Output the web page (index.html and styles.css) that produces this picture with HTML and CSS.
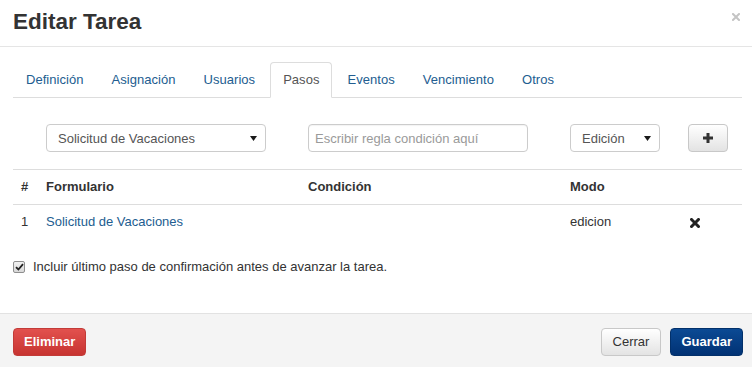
FILE: index.html
```html
<!DOCTYPE html>
<html lang="es">
  <head>
    <meta charset="utf-8" />
    <title>Editar Tarea</title>
    <link rel="stylesheet" href="styles.css">
  </head>

  <body>
    <div class="modal">
      <div class="modal-header">
        <h4 class="modal-title">Editar Tarea</h4>
        <button class="close" title="Cerrar">
          <svg width="8" height="8" viewBox="0 0 8 8"><path d="M1 1L7 7M7 1L1 7" stroke="#c4c4c4" stroke-width="2" stroke-linecap="square"/></svg>
        </button>
      </div>

      <div class="modal-body">
        <ul class="nav-tabs">
          <li><a href="#">Definición</a></li>
          <li><a href="#">Asignación</a></li>
          <li><a href="#">Usuarios</a></li>
          <li class="active"><a href="#">Pasos</a></li>
          <li><a href="#">Eventos</a></li>
          <li><a href="#">Vencimiento</a></li>
          <li><a href="#">Otros</a></li>
        </ul>

        <div class="step-form">
          <span></span>
          <span class="select-wrap form-wide">
            <select class="form-control">
              <option>Solicitud de Vacaciones</option>
            </select>
            <svg class="caret" width="7" height="5" viewBox="0 0 7 5"><path d="M0 0H7L3.5 5Z" fill="#1a1a1a"/></svg>
          </span>
          <input class="form-control form-wide" type="text" placeholder="Escribir regla condición aquí" />
          <span class="select-wrap form-mode">
            <select class="form-control">
              <option>Edición</option>
            </select>
            <svg class="caret" width="7" height="5" viewBox="0 0 7 5"><path d="M0 0H7L3.5 5Z" fill="#1a1a1a"/></svg>
          </span>
          <button class="btn btn-default btn-add" title="Agregar">
            <svg width="10" height="10" viewBox="0 0 10 10"><path d="M3.5 0H6.5V3.5H10V6.5H6.5V10H3.5V6.5H0V3.5H3.5Z" fill="#333"/></svg>
          </button>
        </div>

        <table class="steps">
          <colgroup>
            <col style="width: 25px" />
            <col style="width: 262px" />
            <col style="width: 262px" />
            <col style="width: 120px" />
            <col />
          </colgroup>
          <thead>
            <tr>
              <th>#</th>
              <th>Formulario</th>
              <th>Condición</th>
              <th>Modo</th>
              <th></th>
            </tr>
          </thead>
          <tbody>
            <tr>
              <td>1</td>
              <td><a href="#">Solicitud de Vacaciones</a></td>
              <td></td>
              <td>edicion</td>
              <td>
                <svg class="remove" width="10" height="10" viewBox="0 0 10 10"><path d="M1.5 1.5L8.5 8.5M8.5 1.5L1.5 8.5" stroke="#222" stroke-width="3" stroke-linecap="square"/></svg>
              </td>
            </tr>
          </tbody>
        </table>

        <label class="checkbox">
          <span class="check">
            <svg width="9" height="8" viewBox="0 0 9 8"><path d="M1 4.2L3.4 6.5L8 1.2" fill="none" stroke="#222" stroke-width="1.8"/></svg>
          </span>
          Incluir último paso de confirmación antes de avanzar la tarea.
        </label>
      </div>

      <div class="modal-footer">
        <button class="btn btn-danger">Eliminar</button>
        <span class="spacer"></span>
        <button class="btn btn-default btn-close">Cerrar</button>
        <button class="btn btn-primary">Guardar</button>
      </div>
    </div>
  </body>
</html>
```

FILE: styles.css
```css
* {
  box-sizing: border-box;
}

body {
  margin: 0px;
  background-color: #ffffff;
  color: #333333;
  font-family: "Liberation Sans", Arial, sans-serif;
  font-size: 13px;
  line-height: 18px;
}

a {
  color: #225d90;
  text-decoration: none;
}

.modal {
  width: 752px;
  height: 367px;
  overflow: hidden;
}

.modal-header {
  display: flex;
  align-items: center;
  height: 47px;
  padding: 0px 12px 2px 13px;
  border-bottom: 1px solid #e5e5e5;
}

.modal-title {
  flex: 1;
  margin: 0px;
  font-size: 22.5px;
  line-height: 24px;
  font-weight: bold;
  color: #333333;
}

.close {
  border: 0px;
  padding: 0px;
  background: none;
  display: flex;
  margin-bottom: 10px;
}

.modal-body {
  padding: 15px 10px 0px 13px;
  height: 266px;
}

.nav-tabs {
  display: flex;
  list-style: none;
  margin: 0px;
  padding: 0px;
  border-bottom: 1px solid #dddddd;
}

.nav-tabs li {
  margin-right: 2px;
  margin-bottom: -1px;
}

.nav-tabs a {
  display: block;
  padding: 8px 12px;
  border: 1px solid transparent;
  border-radius: 4px 4px 0px 0px;
  letter-spacing: 0.04px;
}

.nav-tabs .active a {
  color: #555555;
  background-color: #ffffff;
  border-color: #dddddd #dddddd transparent;
}

.step-form {
  display: grid;
  grid-template-columns: 25px 262px 262px 120px 1fr;
  align-items: center;
  margin-top: 26px;
  height: 28px;
}

.form-control {
  height: 28px;
  padding: 0px 6px;
  border: 1px solid #cccccc;
  border-radius: 4px;
  font-family: inherit;
  font-size: 13px;
  color: #555555;
  background-color: #ffffff;
  box-shadow: inset 0 1px 1px rgba(0, 0, 0, 0.05);
}

.form-control::placeholder {
  color: #9a9a9a;
}

.form-wide {
  width: 220px;
  margin-left: 8px;
}

.form-mode {
  width: 90px;
  margin-left: 8px;
}

.select-wrap {
  position: relative;
  display: block;
}

.select-wrap select {
  appearance: none;
  width: 100%;
  padding-left: 11px;
  box-shadow: none;
}

.select-wrap .caret {
  position: absolute;
  right: 9px;
  top: 12px;
}

.btn {
  height: 28px;
  padding: 0px 10px;
  border: 1px solid transparent;
  border-radius: 4px;
  font-family: inherit;
  font-size: 13px;
  line-height: 26px;
  cursor: pointer;
}

.btn-default {
  color: #333333;
  border-color: #c8c8c8;
  background-image: linear-gradient(to bottom, #ffffff 0%, #e3e3e3 100%);
}

.btn-add {
  width: 40px;
  margin-left: 6px;
  padding: 0px;
  display: flex;
  align-items: center;
  justify-content: center;
}

.steps {
  width: 100%;
  border-collapse: collapse;
  margin-top: 17px;
}

.steps th,
.steps td {
  padding: 8px;
  text-align: left;
  border-top: 1px solid #dddddd;
  vertical-align: middle;
}

.steps th {
  font-weight: bold;
  height: 35px;
}

.steps td {
  height: 35px;
}

.remove {
  display: block;
  margin-top: 1px;
}

.checkbox {
  display: flex;
  align-items: center;
  margin-top: 18px;
  color: #333333;
}

.check {
  display: flex;
  align-items: center;
  justify-content: center;
  width: 12px;
  height: 12px;
  margin-right: 8px;
  border: 1px solid #8f8f8f;
  border-radius: 2px;
  background-image: linear-gradient(to bottom, #f2f2f2 0%, #d8d8d8 100%);
}

.modal-footer {
  display: flex;
  align-items: flex-start;
  height: 54px;
  padding: 14px 9px 0px 13px;
  background-color: #f4f4f4;
  border-top: 1px solid #e2e2e2;
}

.spacer {
  flex: 1;
}

.btn-danger {
  color: #ffffff;
  font-weight: bold;
  border-color: #c23b38;
  background-image: linear-gradient(to bottom, #e2514e 0%, #c73431 100%);
}

.btn-close {
  padding: 0px 11px;
  margin-right: 9px;
}

.btn-primary {
  color: #ffffff;
  font-weight: bold;
  padding: 0px 10px;
  border-color: #02306a;
  background-image: linear-gradient(to bottom, #0b4a94 0%, #013274 100%);
}
```
